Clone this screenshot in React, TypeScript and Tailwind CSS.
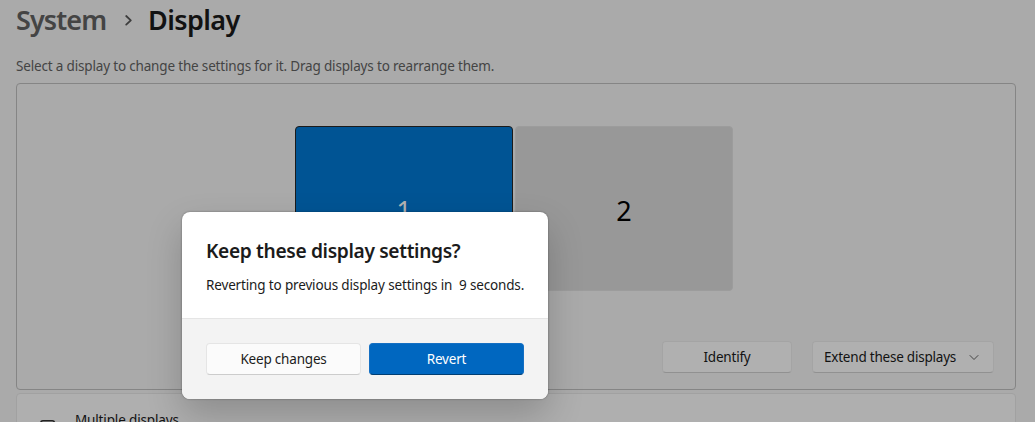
import type { ReactNode } from "react";

function Chevron({ className, d, size, width }: { className: string; d: string; size: number; width: number }) {
  return (
    <svg className={className} width={size} height={size} viewBox={`0 0 ${size} ${size}`} fill="none" stroke="currentColor" strokeWidth={width} strokeLinecap="round" strokeLinejoin="round">
      <path d={d} />
    </svg>
  );
}

function PageButton({ className, children }: { className: string; children: ReactNode }) {
  return (
    <button className={`flex h-8 items-center rounded-[4px] border border-[#a4a4a4] border-b-[#919191] bg-[#b0b0b0] pt-px text-[13.5px] tracking-[-0.22px] text-[#121212] ${className}`}>
      {children}
    </button>
  );
}

function Dialog() {
  return (
    <div role="dialog" className="absolute left-[182px] top-[212px] flex h-[187px] w-[366px] flex-col overflow-hidden rounded-[8px] bg-white text-[#1b1b1b] shadow-[0_0_2px_rgba(0,0,0,0.4),0_16px_36px_rgba(0,0,0,0.2)]">
      <div className="flex h-[106px] flex-col px-6 pt-[25px]">
        <h2 className="whitespace-nowrap text-[19.2px] font-[560] leading-[28px] tracking-[-0.35px]">Keep these display settings?</h2>
        <p className="mt-[10px] whitespace-pre text-[13.5px] leading-[20px] tracking-[-0.15px]">Reverting to previous display settings in  9 seconds.</p>
      </div>
      <div className="flex flex-1 gap-2 border-t border-[#e5e5e5] bg-[#f3f3f3] px-6 pt-6 text-[13.5px]">
        <button className="h-8 flex-1 rounded-[4px] border border-[#e5e5e5] border-b-[#cccccc] bg-[#fbfbfb] pt-px tracking-[-0.2px]">
          Keep changes
        </button>
        <button className="h-8 flex-1 rounded-[4px] border border-[#146fc3] border-b-[#003e73] bg-[#0067c0] pt-px tracking-[-0.2px] text-white">
          Revert
        </button>
      </div>
    </div>
  );
}

export default function App() {
  return (
    <main className="relative h-[422px] w-[1035px] overflow-hidden bg-[#aaaaaa] px-4 pr-[19px] font-['Noto_Sans','Open_Sans',sans-serif]">
      <header className="flex h-[40px] items-center text-[27px] font-[560] leading-[40px]">
        <span className="w-[90px] whitespace-nowrap tracking-[-0.9px] text-[#444444]">System</span>
        <Chevron className="ml-[16px] text-[#3d3d3d]" d="M4.2 4 L8.8 8.3 L4.2 12.6" size={16} width={1.8} />
        <span className="ml-[10px] tracking-[-0.6px] text-[#121212]">Display</span>
      </header>
      <p className="mt-[16px] h-[20px] whitespace-nowrap text-[13.5px] leading-[20px] tracking-[-0.17px] text-[#444444]">Select a display to change the settings for it. Drag displays to rearrange them.</p>

      <section className="mt-[7px] flex h-[307px] flex-col rounded-[4px] border border-[#858585]">
        <div className="mt-[42px] flex h-[165px] gap-[2px] pl-[278px] text-[27px]">
          <div className="flex w-[218px] items-center justify-center rounded-[4px] border border-[#1b1b1b] bg-[#005494] pt-[5px] text-[#b2b2b2]">1</div>
          <div className="flex w-[218px] items-center justify-center rounded-[4px] border border-[#9c9c9c] bg-[#989898] pt-[5px] text-black">2</div>
        </div>
        <div className="mt-[50px] flex justify-end gap-5 pr-[21px]">
          <PageButton className="w-[130px] justify-center">Identify</PageButton>
          <PageButton className="w-[182px] justify-between pl-[11px] pr-[13px]">
            <span className="whitespace-nowrap">Extend these displays</span>
            <Chevron className="text-[#444444]" d="M2 3.5 L6 7.5 L10 3.5" size={12} width={1} />
          </PageButton>
        </div>
      </section>

      <section className="mt-[3px] flex h-[69px] rounded-[4px] border border-[#a1a1a1] bg-[#afafaf] pl-[23px] pt-[16px] text-[13.5px] text-[#121212]">
        <svg width="16" height="16" viewBox="0 0 16 16" fill="none" stroke="#222222" strokeWidth="1.6" className="mt-[10px]">
          <rect x="0.8" y="0.8" width="13.6" height="12" rx="2" />
        </svg>
        <span className="ml-[19px] leading-[20px] tracking-[-0.15px]">Multiple displays</span>
      </section>

      <Dialog />
    </main>
  );
}
